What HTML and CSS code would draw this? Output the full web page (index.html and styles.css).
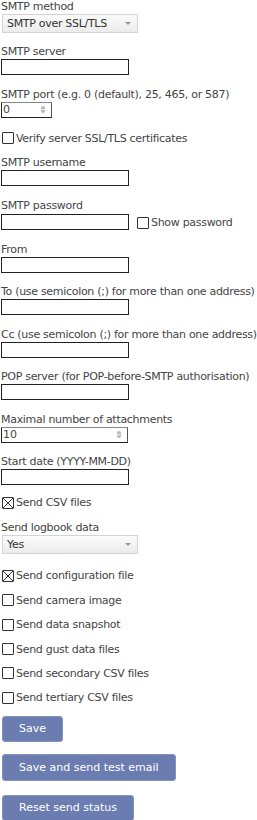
FILE: index.html
```html
<!DOCTYPE html>
<html lang="en">
<head>
    <meta charset="UTF-8">
    <title>Email settings</title>
    <link rel="stylesheet" href="styles.css">
</head>
<body>
    <form class="settings">
        <div class="field">
            <label>SMTP method</label>
            <div class="select"><span>SMTP over SSL/TLS</span><i class="arrow"></i></div>
        </div>

        <div class="field">
            <label>SMTP server</label>
            <input type="text" class="text">
        </div>

        <div class="field">
            <label>SMTP port (e.g. 0 (default), 25, 465, or 587)</label>
            <div class="num small"><input type="text" value="0"><i class="spin"></i></div>
        </div>

        <div class="check first"><input type="checkbox"><span>Verify server SSL/TLS certificates</span></div>

        <div class="field">
            <label>SMTP username</label>
            <input type="text" class="text">
        </div>

        <div class="field">
            <label>SMTP password</label>
            <div class="pw-row">
                <input type="password" class="text">
                <div class="check inline"><input type="checkbox"><span>Show password</span></div>
            </div>
        </div>

        <div class="field">
            <label>From</label>
            <input type="text" class="text">
        </div>

        <div class="field">
            <label>To (use semicolon (;) for more than one address)</label>
            <input type="text" class="text">
        </div>

        <div class="field">
            <label>Cc (use semicolon (;) for more than one address)</label>
            <input type="text" class="text">
        </div>

        <div class="field">
            <label>POP server (for POP-before-SMTP authorisation)</label>
            <input type="text" class="text">
        </div>

        <div class="field">
            <label>Maximal number of attachments</label>
            <div class="num"><input type="text" value="10"><i class="spin"></i></div>
        </div>

        <div class="field last">
            <label>Start date (YYYY-MM-DD)</label>
            <input type="text" class="text">
        </div>

        <div class="check"><input type="checkbox" checked><span>Send CSV files</span></div>

        <div class="field">
            <label>Send logbook data</label>
            <div class="select"><span>Yes</span><i class="arrow"></i></div>
        </div>

        <div class="checks">
            <div class="check"><input type="checkbox" checked><span>Send configuration file</span></div>
            <div class="check"><input type="checkbox"><span>Send camera image</span></div>
            <div class="check"><input type="checkbox"><span>Send data snapshot</span></div>
            <div class="check"><input type="checkbox"><span>Send gust data files</span></div>
            <div class="check"><input type="checkbox"><span>Send secondary CSV files</span></div>
            <div class="check"><input type="checkbox"><span>Send tertiary CSV files</span></div>
        </div>

        <button type="button" class="btn">Save</button>
        <button type="button" class="btn wide">Save and send test email</button>
        <button type="button" class="btn">Reset send status</button>
    </form>
</body>
</html>
```

FILE: styles.css
```css
body {
    margin: 0;
    padding: 0 1px;
    font-family: "DejaVu Sans", sans-serif;
    font-size: 11px;
    letter-spacing: -0.3px;
    color: #444;
    background: #fff;
}
.field {
    margin-bottom: 12.4px;
}
.field.last {
    margin-bottom: 10px;
}
label {
    display: block;
    line-height: 14px;
    white-space: nowrap;
}
.text {
    display: block;
    box-sizing: border-box;
    width: 128px;
    height: 16px;
    margin: 0;
    padding: 0 2px;
    border: 1px solid #222;
    border-radius: 0;
    font: inherit;
    outline: none;
}
.select {
    display: flex;
    align-items: center;
    box-sizing: border-box;
    width: 136px;
    height: 19px;
    margin-left: 1px;
    padding: 0 6px 0 4px;
    border: 1px solid #d4d4d4;
    background: linear-gradient(#fbfbfb, #ececec);
    color: #333;
}
.select span {
    flex: 1;
}
.arrow {
    width: 0;
    height: 0;
    border-left: 3px solid transparent;
    border-right: 3px solid transparent;
    border-top: 3px solid #999;
}
.num {
    display: flex;
    align-items: center;
    box-sizing: border-box;
    width: 127px;
    height: 16px;
    border: 1px solid #222;
    border-top-color: #888;
    border-right-color: #555;
}
.num.small {
    width: 51px;
}
.num input {
    flex: 1;
    min-width: 0;
    height: 14px;
    padding: 0 1px;
    margin: 0;
    border: none;
    font: inherit;
    color: #444;
    outline: none;
}
.spin {
    width: 4px;
    height: 7px;
    margin-right: 6px;
    border-radius: 2px;
    background: linear-gradient(#bbb 0, #bbb 40%, #eee 40%, #eee 60%, #bbb 60%);
}
.check {
    display: flex;
    align-items: center;
    height: 16px;
    margin-left: 1px;
}
.check input {
    appearance: none;
    width: 12px;
    height: 12px;
    margin: 0 2px 0 0;
    border: 1px solid #333;
    border-radius: 1px;
    background: #fff;
}
.check input:checked {
    background:
        linear-gradient(45deg, transparent calc(50% - 0.7px), #333 calc(50% - 0.7px), #333 calc(50% + 0.7px), transparent calc(50% + 0.7px)),
        linear-gradient(-45deg, transparent calc(50% - 0.7px), #333 calc(50% - 0.7px), #333 calc(50% + 0.7px), transparent calc(50% + 0.7px)),
        #fff;
}
.check.first {
    margin-bottom: 9px;
}
.field + .check {
    margin-bottom: 10px;
}
.pw-row {
    display: flex;
    align-items: center;
}
.check.inline {
    margin-left: 8px;
    margin-top: 2px;
}
.checks {
    margin-top: 14px;
}
.checks .check {
    margin-bottom: 8.4px;
}
.checks .check:last-child {
    margin-bottom: 10px;
}
.btn {
    display: block;
    height: 26px;
    margin: 0 0 12px 1px;
    padding: 0 16px;
    border: 1px solid #8494c0;
    border-radius: 3px;
    background: #6b7db0;
    color: #fff;
    font: inherit;
}
.btn.wide {
    height: 27px;
    margin-bottom: 14px;
}
```
